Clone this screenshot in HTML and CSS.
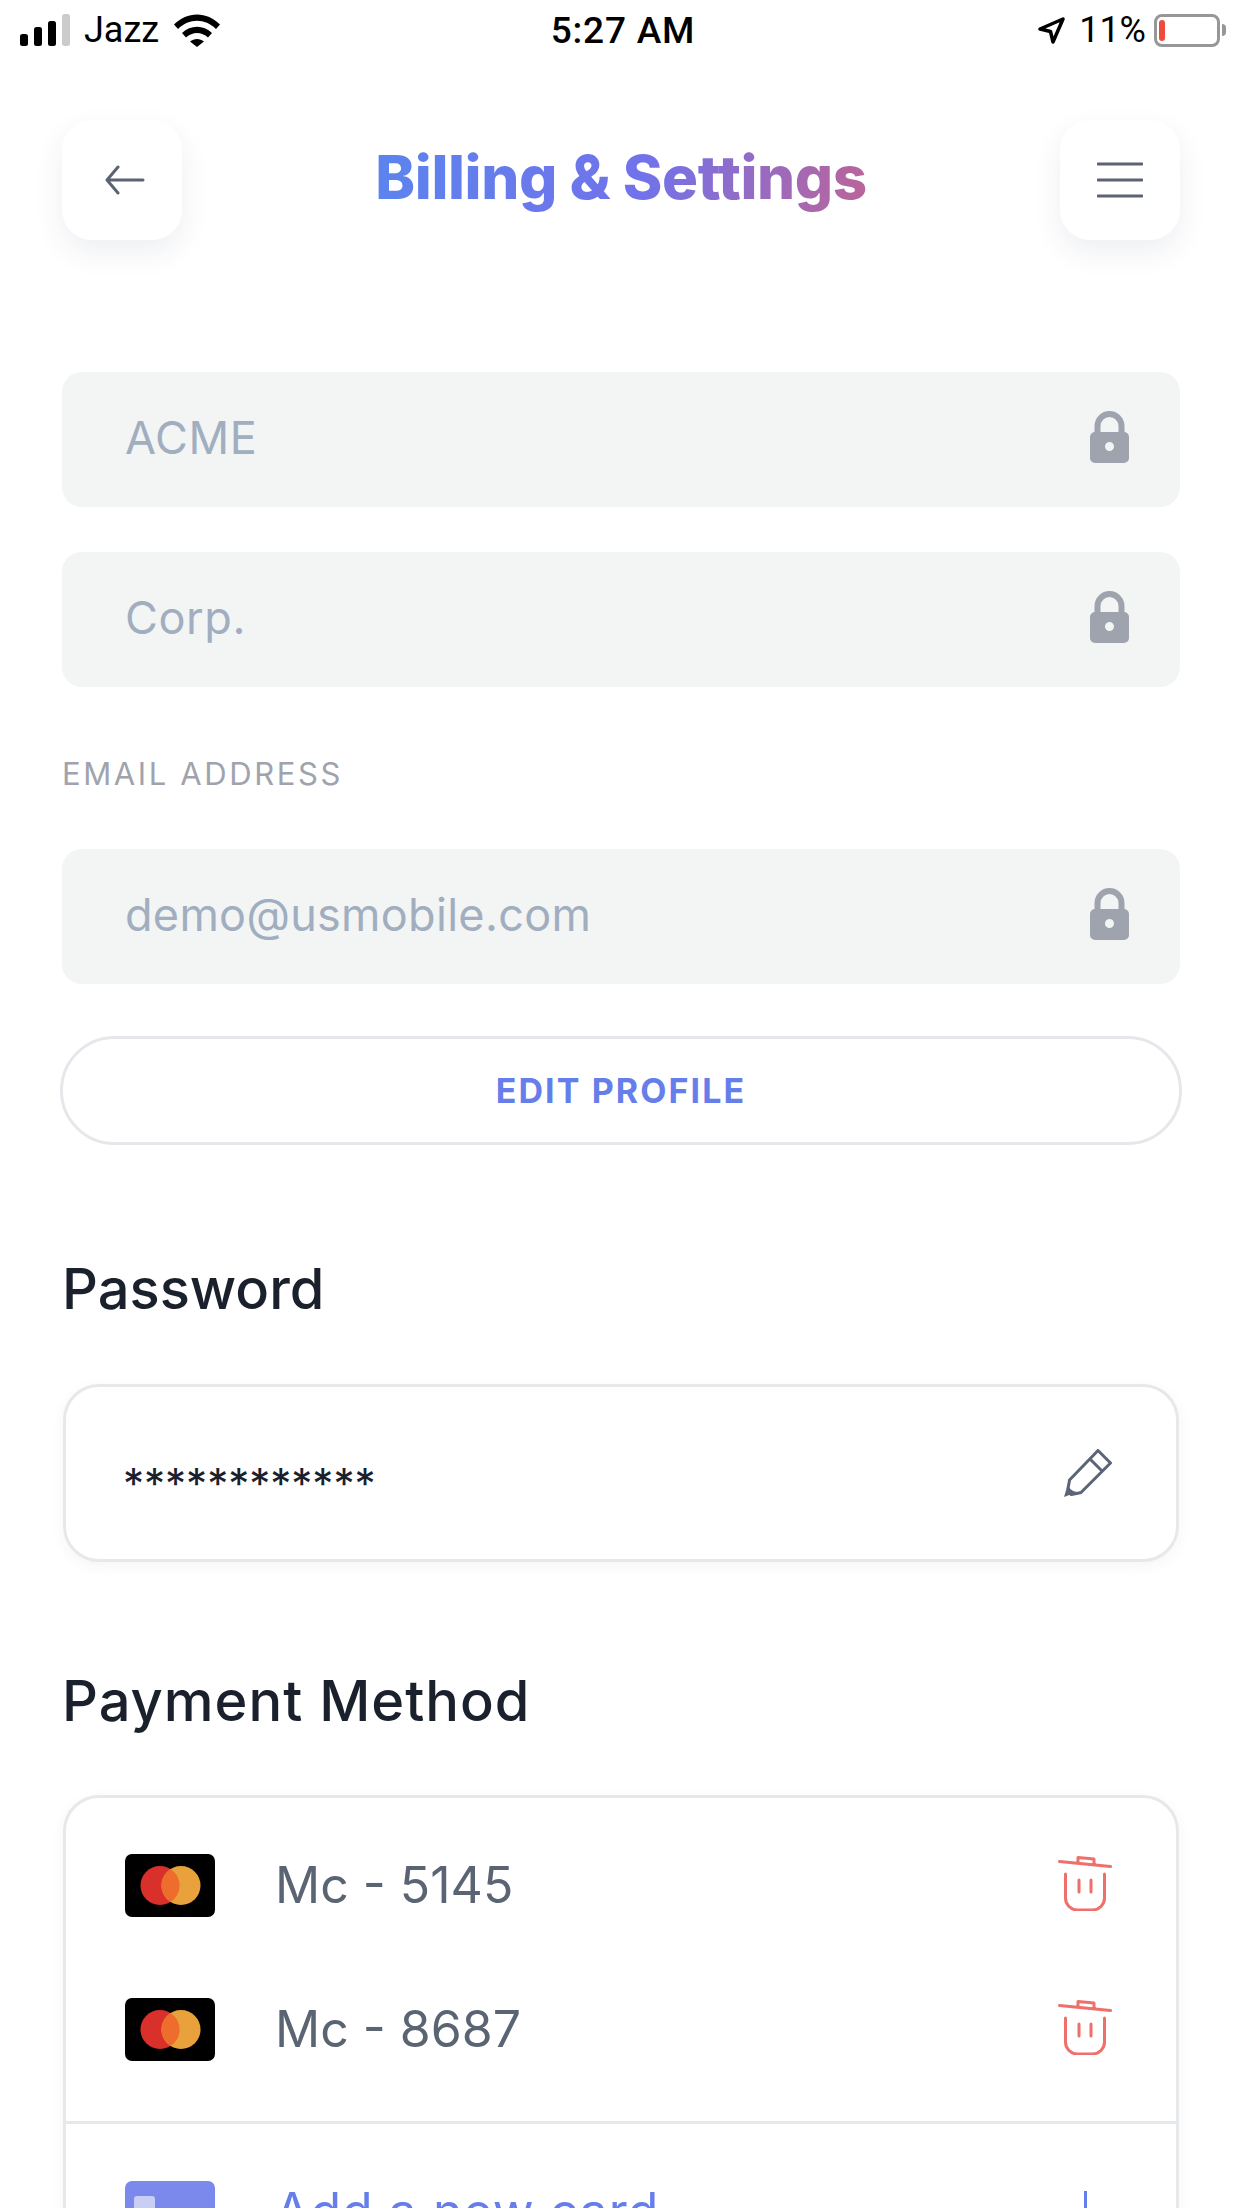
FILE: index.html
```html
<!DOCTYPE html>
<html lang="en">
<head>
    <meta charset="utf-8">
    <title>Billing &amp; Settings</title>
    <link rel="stylesheet" href="styles.css">
</head>
<body>
    <svg class="sprites" width="0" height="0">
        <symbol id="lock" viewBox="0 0 39 52">
            <path fill="none" stroke="#9ea3ad" stroke-width="6" d="M7.500 24V15a12 12 0 0 1 24 0v9"/>
            <path fill="#9ea3ad" fill-rule="evenodd" d="M5 21h29a5 5 0 0 1 5 5v21a5 5 0 0 1-5 5H5a5 5 0 0 1-5-5V26a5 5 0 0 1 5-5zm14.500 10a4.500 4.500 0 1 0 0 9 4.500 4.500 0 0 0 0-9z"/>
        </symbol>
        <symbol id="mc" viewBox="0 0 90 63">
            <rect width="90" height="63" rx="7" fill="#000"/>
            <circle cx="35" cy="31.500" r="19.500" fill="#d9302b"/>
            <circle cx="56" cy="31.500" r="19.500" fill="#e9a23b"/>
            <path fill="#ee6d2c" d="M45.500 15a19.500 19.500 0 0 1 0 33 19.500 19.500 0 0 1 0-33z"/>
        </symbol>
        <symbol id="trash" viewBox="0 0 54 56">
            <g fill="none" stroke="#ef6f6a" stroke-width="3" stroke-linecap="round" stroke-linejoin="round">
                <path d="M1.500 6.500l51 5M20 8V2.500l16 1.500v5.500"/>
                <path d="M7.500 19v24a12 12 0 0 0 12 12h15a12 12 0 0 0 12-12V19M21 25v12M33 25v12"/>
            </g>
        </symbol>
    </svg>

    <div class="status-bar">
        <div class="status-left">
            <svg class="signal" width="50" height="32" viewBox="0 0 50 32">
                <rect x="0" y="20" width="8" height="12" rx="2.500" fill="#000"/>
                <rect x="14" y="13" width="8" height="19" rx="2.500" fill="#000"/>
                <rect x="28" y="7" width="8" height="25" rx="2.500" fill="#000"/>
                <rect x="42" y="0" width="8" height="32" rx="2.500" fill="#ccc"/>
            </svg>
            <span>Jazz</span>
            <svg class="wifi" width="46" height="33" viewBox="0 0 46 33">
                <path d="M0 10.500C13-3 33-3 46 10.500l-4 4.500C31 4 15 4 4 15z"/>
                <path d="M8 19c8.500-8.500 21.500-8.500 30 0l-4 4.500c-6.500-6-15.500-6-22 0z"/>
                <path d="M16 27.500c4-3.500 10-3.500 14 0L23 33z"/>
            </svg>
        </div>
        <div class="status-time">5:27 AM</div>
        <div class="status-right">
            <svg width="27" height="27" viewBox="0 0 27 27">
                <path fill="none" stroke="#000" stroke-width="3.500" stroke-linejoin="round" d="M2 12L25 2 15 25l-2.500-10.500z"/>
            </svg>
            <span>11%</span>
            <div class="battery"><div class="battery-level"></div></div>
            <div class="battery-nub"></div>
        </div>
    </div>

    <div class="container">
        <!-- Header -->
        <div class="header">
            <div class="square-btn">
                <svg class="back-icon" width="40" height="30" viewBox="0 0 40 30">
                    <path fill="none" stroke="#5b6470" stroke-width="3" stroke-linecap="round" stroke-linejoin="round" d="M38 15H2M13 2L2 15l11 13"/>
                </svg>
            </div>
            <h1 class="title">Billing &amp; Settings</h1>
            <div class="square-btn">
                <svg width="46" height="36" viewBox="0 0 46 36">
                    <path fill="none" stroke="#5b6470" stroke-width="3" stroke-linecap="round" d="M1 2h44M1 18h44M1 34h44"/>
                </svg>
            </div>
        </div>

        <!-- Profile -->
        <div class="field first"><span>ACME</span><svg class="lock"><use href="#lock"/></svg></div>
        <div class="field second"><span>Corp.</span><svg class="lock"><use href="#lock"/></svg></div>
        <div class="label">EMAIL ADDRESS</div>
        <div class="field"><span class="email">demo@usmobile.com</span><svg class="lock"><use href="#lock"/></svg></div>
        <div class="edit-btn">EDIT PROFILE</div>

        <!-- Password -->
        <h2 class="section-title password-title">Password</h2>
        <div class="card password-card">
            <span class="stars">************</span>
            <svg width="48" height="48" viewBox="0 0 48 48">
                <g fill="none" stroke="#5b6577" stroke-width="3" stroke-linejoin="round">
                    <path d="M34 1.500L46.500 14 17 43.500c-4 1-8 1.800-10 2-1-2-2-3.500-3-6 .3-2 1-4.500 1.500-8.500z"/>
                    <path d="M26 10l12.500 12.500"/>
                </g>
                <path fill="#5b6577" d="M0 48l4-13c1 4 3 7 9 8z"/>
            </svg>
        </div>

        <!-- Payment -->
        <h2 class="section-title payment-title">Payment Method</h2>
        <div class="card payment-card">
            <div class="pay-row">
                <svg class="card-icon"><use href="#mc"/></svg>
                <span class="pay-name">Mc - 5145</span>
                <svg class="trash"><use href="#trash"/></svg>
            </div>
            <div class="pay-row">
                <svg class="card-icon"><use href="#mc"/></svg>
                <span class="pay-name">Mc - 8687</span>
                <svg class="trash"><use href="#trash"/></svg>
            </div>
            <div class="add-row">
                <div class="add-icon"><div class="add-chip"></div></div>
                <span class="add-text">Add a new card</span>
                <div class="plus"></div>
            </div>
        </div>
    </div>
</body>
</html>
```

FILE: styles.css
```css
html, body {
    margin: 0;
    padding: 0;
    height: 2208px;
    overflow: hidden;
    background-color: #ffffff;
}

body {
    font-family: Inter, "Liberation Sans", sans-serif;
}

.sprites {
    display: block;
    height: 0;
}

/* Status bar */
.status-bar {
    height: 60px;
    padding: 0 16px 0 20px;
    display: grid;
    grid-template-columns: 1fr auto 1fr;
    align-items: center;
    font-family: Roboto, sans-serif;
    font-size: 36px;
    color: #000;
}

.status-left, .status-right {
    display: flex;
    align-items: center;
}

.status-left span {
    margin: 0 15px 0 14px;
}

.wifi {
    fill: #000;
}

.status-time {
    font-weight: 500;
    font-size: 37px;
    letter-spacing: 0.8px;
}

.status-right {
    justify-content: flex-end;
}

.status-right span {
    margin: 0 8px 0 14px;
    font-size: 36px;
}

.battery {
    width: 66px;
    height: 33px;
    box-sizing: border-box;
    border: 3px solid #979797;
    border-radius: 8px;
    padding: 3px 2px;
}

.battery-level {
    width: 6px;
    height: 100%;
    background-color: #ee4b3c;
    border-radius: 3px;
}

.battery-nub {
    width: 4px;
    height: 12px;
    margin-left: 2px;
    background-color: #979797;
    border-radius: 0 4px 4px 0;
}

/* Page */
.container {
    padding: 60px 62px 0;
}

.header {
    display: flex;
    justify-content: space-between;
    align-items: center;
}

.square-btn {
    width: 120px;
    height: 120px;
    display: flex;
    align-items: center;
    justify-content: center;
    background-color: #ffffff;
    border-radius: 30px;
    box-shadow: 0 12px 30px rgba(40, 50, 90, 0.08);
}

.back-icon {
    margin-left: 5px;
}

.title {
    margin: 0 0 6px;
    font-size: 60px;
    font-weight: 800;
    letter-spacing: -0.4px;
    background: linear-gradient(100deg, #5b84ee 0%, #7272ea 55%, #bc6498 100%);
    -webkit-background-clip: text;
    background-clip: text;
    color: transparent;
}

/* Form fields */
.field {
    height: 135px;
    box-sizing: border-box;
    padding: 0 51px 5px 63px;
    display: flex;
    align-items: center;
    justify-content: space-between;
    background-color: #f3f4f4;
    border-radius: 20px;
    font-size: 45px;
    letter-spacing: 0.6px;
    color: #a0aec0;
}

.field.first {
    margin-top: 132px;
}

.field.second {
    margin-top: 45px;
}

.email {
    letter-spacing: 0.3px;
}

.lock {
    width: 39px;
    height: 52px;
}

.label {
    margin: 68px 0 56px;
    height: 38px;
    line-height: 38px;
    font-size: 31px;
    letter-spacing: 2.600px;
    color: #9ea3ad;
}

.edit-btn {
    height: 109px;
    margin: 52px -2px 0;
    box-sizing: border-box;
    display: flex;
    align-items: center;
    justify-content: center;
    border: 3px solid #e5e7eb;
    border-radius: 55px;
    font-size: 34px;
    font-weight: 700;
    letter-spacing: 2.100px;
    color: #667eea;
}

/* Sections */
.section-title {
    margin: 0;
    font-size: 56px;
    font-weight: 500;
    line-height: 66px;
    color: #1a202c;
}

.password-title {
    margin-top: 111px;
}

.payment-title {
    margin-top: 106px;
    letter-spacing: 1px;
}

.card {
    margin: 0 1px;
    box-sizing: border-box;
    border: 3px solid #e7e8ea;
    border-radius: 36px;
    background-color: #ffffff;
    box-shadow: 0 4px 14px rgba(40, 50, 90, 0.05);
}

.password-card {
    height: 178px;
    margin-top: 62px;
    padding: 0 64px 0 57px;
    display: flex;
    align-items: center;
    justify-content: space-between;
}

.stars {
    margin-top: 20px;
    font-size: 42px;
    color: #1a202c;
}

.payment-card {
    margin-top: 61px;
    height: 600px;
    padding-top: 15px;
}

.pay-row {
    height: 144px;
    padding: 0 64px 0 59px;
    display: flex;
    align-items: center;
}

.card-icon {
    width: 90px;
    height: 63px;
}

.pay-name {
    margin-left: 60px;
    font-size: 50px;
    color: #5a6473;
    flex: 1;
}

.trash {
    width: 54px;
    height: 56px;
    margin-bottom: 5px;
}

.add-row {
    border-top: 3px solid #e7e8ea;
    margin-top: 20px;
    padding: 57px 64px 0 59px;
    display: flex;
    align-items: flex-start;
}

.add-icon {
    width: 90px;
    height: 63px;
    background-color: #7b88ec;
    border-radius: 7px;
    padding: 15px 0 0 9px;
    box-sizing: border-box;
}

.add-chip {
    width: 21px;
    height: 18px;
    background-color: #c9cef7;
    border-radius: 3px;
}

.add-text {
    margin-left: 60px;
    font-size: 50px;
    letter-spacing: 1px;
    color: #667eea;
    flex: 1;
}

.plus {
    width: 3px;
    height: 40px;
    margin: 10px 25px 0 0;
    background-color: #667eea;
}
```
